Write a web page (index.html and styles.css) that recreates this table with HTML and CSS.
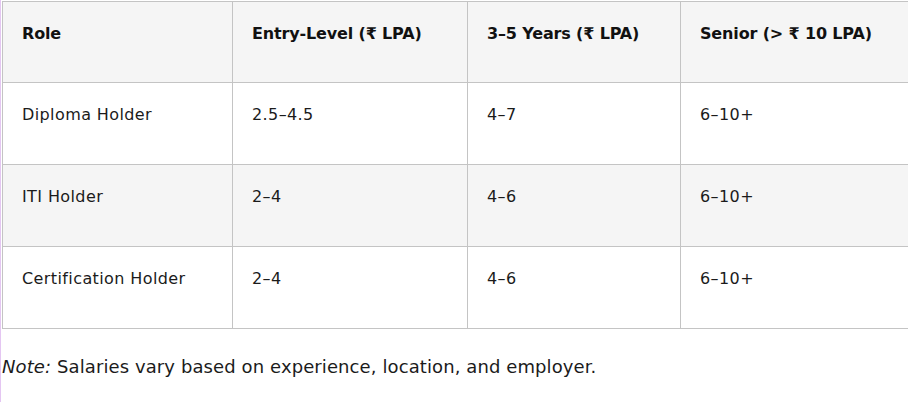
FILE: index.html
```html
<!DOCTYPE html>
<html lang="en">
<head>
<meta charset="utf-8">
<link rel="stylesheet" href="styles.css">
</head>
<body>
<div class="page">
  <table class="salary">
    <thead>
      <tr>
        <th class="c1">Role</th>
        <th class="c2">Entry-Level (₹ LPA)</th>
        <th class="c3">3–5 Years (₹ LPA)</th>
        <th class="c4">Senior (&gt; ₹ 10 LPA)</th>
      </tr>
    </thead>
    <tbody>
      <tr>
        <td>Diploma Holder</td>
        <td>2.5–4.5</td>
        <td>4–7</td>
        <td>6–10+</td>
      </tr>
      <tr class="alt">
        <td>ITI Holder</td>
        <td>2–4</td>
        <td>4–6</td>
        <td>6–10+</td>
      </tr>
      <tr>
        <td>Certification Holder</td>
        <td>2–4</td>
        <td>4–6</td>
        <td>6–10+</td>
      </tr>
    </tbody>
  </table>
  <p class="note"><em>Note:</em> Salaries vary based on experience, location, and employer.</p>
</div>
</body>
</html>
```
FILE: styles.css
```css
html, body {
  margin: 0;
  padding: 0;
  background: #ffffff;
  overflow: hidden;
}
body {
  font-family: "DejaVu Sans", "Noto Sans", sans-serif;
  color: #1b1b1b;
}
.page {
  border-left: 1px solid #e4c6f2;
  padding-left: 1px;
  padding-top: 1px;
  height: 402px;
  box-sizing: border-box;
  overflow: hidden;
}
.salary {
  border-collapse: collapse;
  table-layout: fixed;
  width: 906px;
}
.salary th,
.salary td {
  border: 1px solid #c4c4c4;
  text-align: left;
  vertical-align: top;
  padding: 20px 19px 37px;
  font-size: 16px;
  line-height: 24px;
  height: 24px;
  letter-spacing: 0.4px;
}
.salary th:last-child,
.salary td:last-child {
  border-right: none;
}
.salary th {
  font-weight: bold;
  color: #111;
  background: #f5f5f5;
  letter-spacing: -0.15px;
  padding-bottom: 36px;
}
.salary td {
  font-weight: normal;
}
.salary tr.alt td {
  background: #f5f5f5;
}
.c1 { width: 191px; }
.c2 { width: 196px; }
.c3 { width: 174px; }
.c4 { width: auto; }
.note {
  margin: 24px 0 0;
  font-size: 18px;
  line-height: 27px;
  color: #1b1b1b;
  letter-spacing: 0.1px;
}
.note em {
  font-style: italic;
}
```
